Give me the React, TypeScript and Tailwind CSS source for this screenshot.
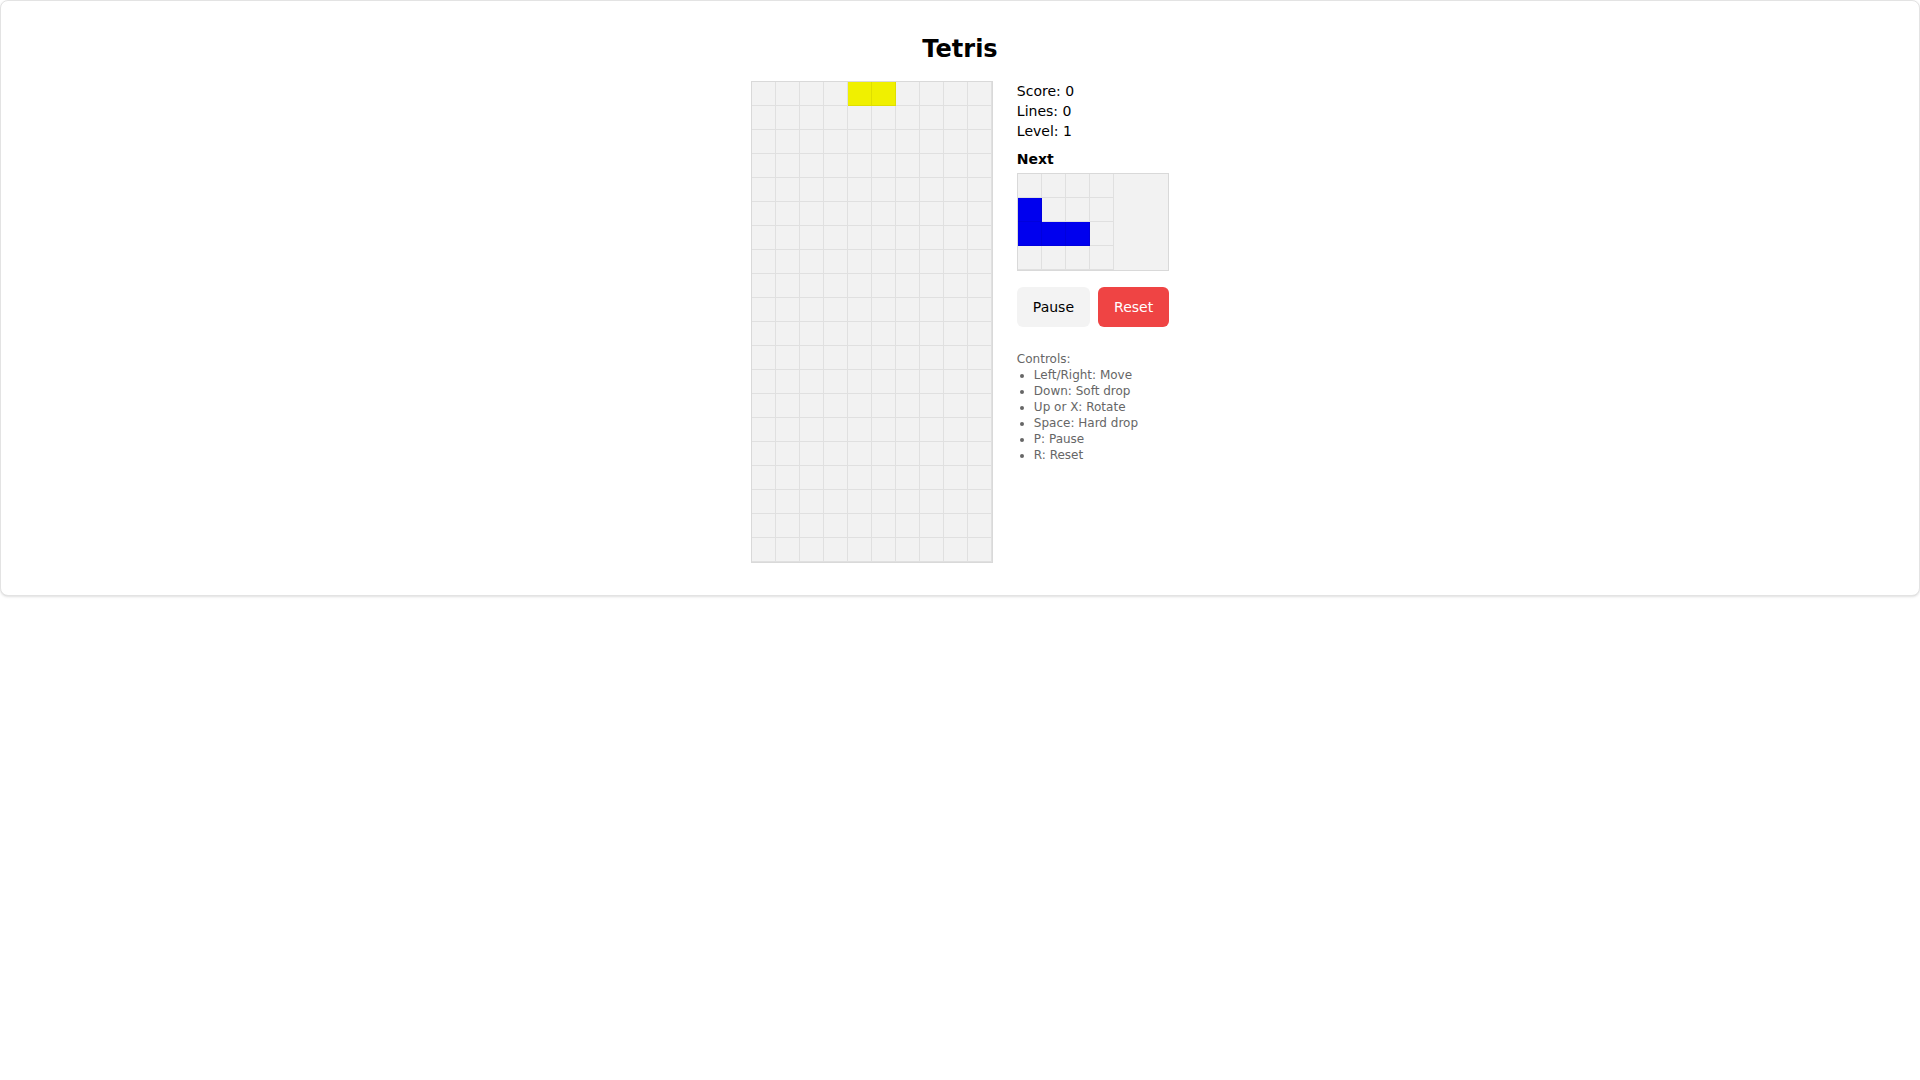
const COLS = 10
const ROWS = 20

const board: (string | null)[][] = Array.from({ length: ROWS }, () =>
  Array.from({ length: COLS }, () => null)
)
board[0][4] = 'bg-[#f0f000]'
board[0][5] = 'bg-[#f0f000]'

const next: (string | null)[][] = [
  [null, null, null, null],
  ['bg-[#0000ee]', null, null, null],
  ['bg-[#0000ee]', 'bg-[#0000ee]', 'bg-[#0000ee]', null],
  [null, null, null, null],
]

const controls = [
  'Left/Right: Move',
  'Down: Soft drop',
  'Up or X: Rotate',
  'Space: Hard drop',
  'P: Pause',
  'R: Reset',
]

function Cell({ color }: { color: string | null }) {
  return (
    <div
      className={`h-6 w-6 border-b border-r border-black/[0.07] ${color ?? 'bg-[#f2f2f2]'}`}
    />
  )
}

function Board() {
  return (
    <div className="border border-[#d9d9d9] bg-[#f2f2f2]">
      {board.map((row, r) => (
        <div key={r} className="flex">
          {row.map((c, i) => (
            <Cell key={i} color={c} />
          ))}
        </div>
      ))}
    </div>
  )
}

function Panel() {
  return (
    <div className="flex flex-col text-sm leading-5 text-black">
      <p>Score: 0</p>
      <p>Lines: 0</p>
      <p>Level: 1</p>

      <p className="mt-2 font-bold">Next</p>
      <div className="mt-1 border border-[#d9d9d9] bg-[#f2f2f2]">
        <div className="w-24">
          {next.map((row, r) => (
            <div key={r} className="flex">
              {row.map((c, i) => (
                <Cell key={i} color={c} />
              ))}
            </div>
          ))}
        </div>
      </div>

      <div className="mt-4 flex gap-2">
        <button className="h-10 rounded-md bg-[#f3f3f3] px-4 text-sm text-black">
          Pause
        </button>
        <button className="h-10 rounded-md bg-[#ef4444] px-4 text-sm text-white">
          Reset
        </button>
      </div>

      <div className="mt-6 text-xs leading-4 text-[#666]">
        <p>Controls:</p>
        <ul className="list-disc pl-[17px]">
          {controls.map((c) => (
            <li key={c}>{c}</li>
          ))}
        </ul>
      </div>
    </div>
  )
}

export default function App() {
  return (
    <div className="min-h-screen bg-white font-['DejaVu_Sans',sans-serif]">
      <div className="rounded-lg border border-[#e3e3e3] bg-white px-8 pb-8 pt-[32px] shadow-sm">
        <h1 className="mb-4 text-center text-2xl font-bold leading-8 text-black">
          Tetris
        </h1>
        <div className="flex items-start justify-center gap-6">
          <Board />
          <Panel />
        </div>
      </div>
    </div>
  )
}
